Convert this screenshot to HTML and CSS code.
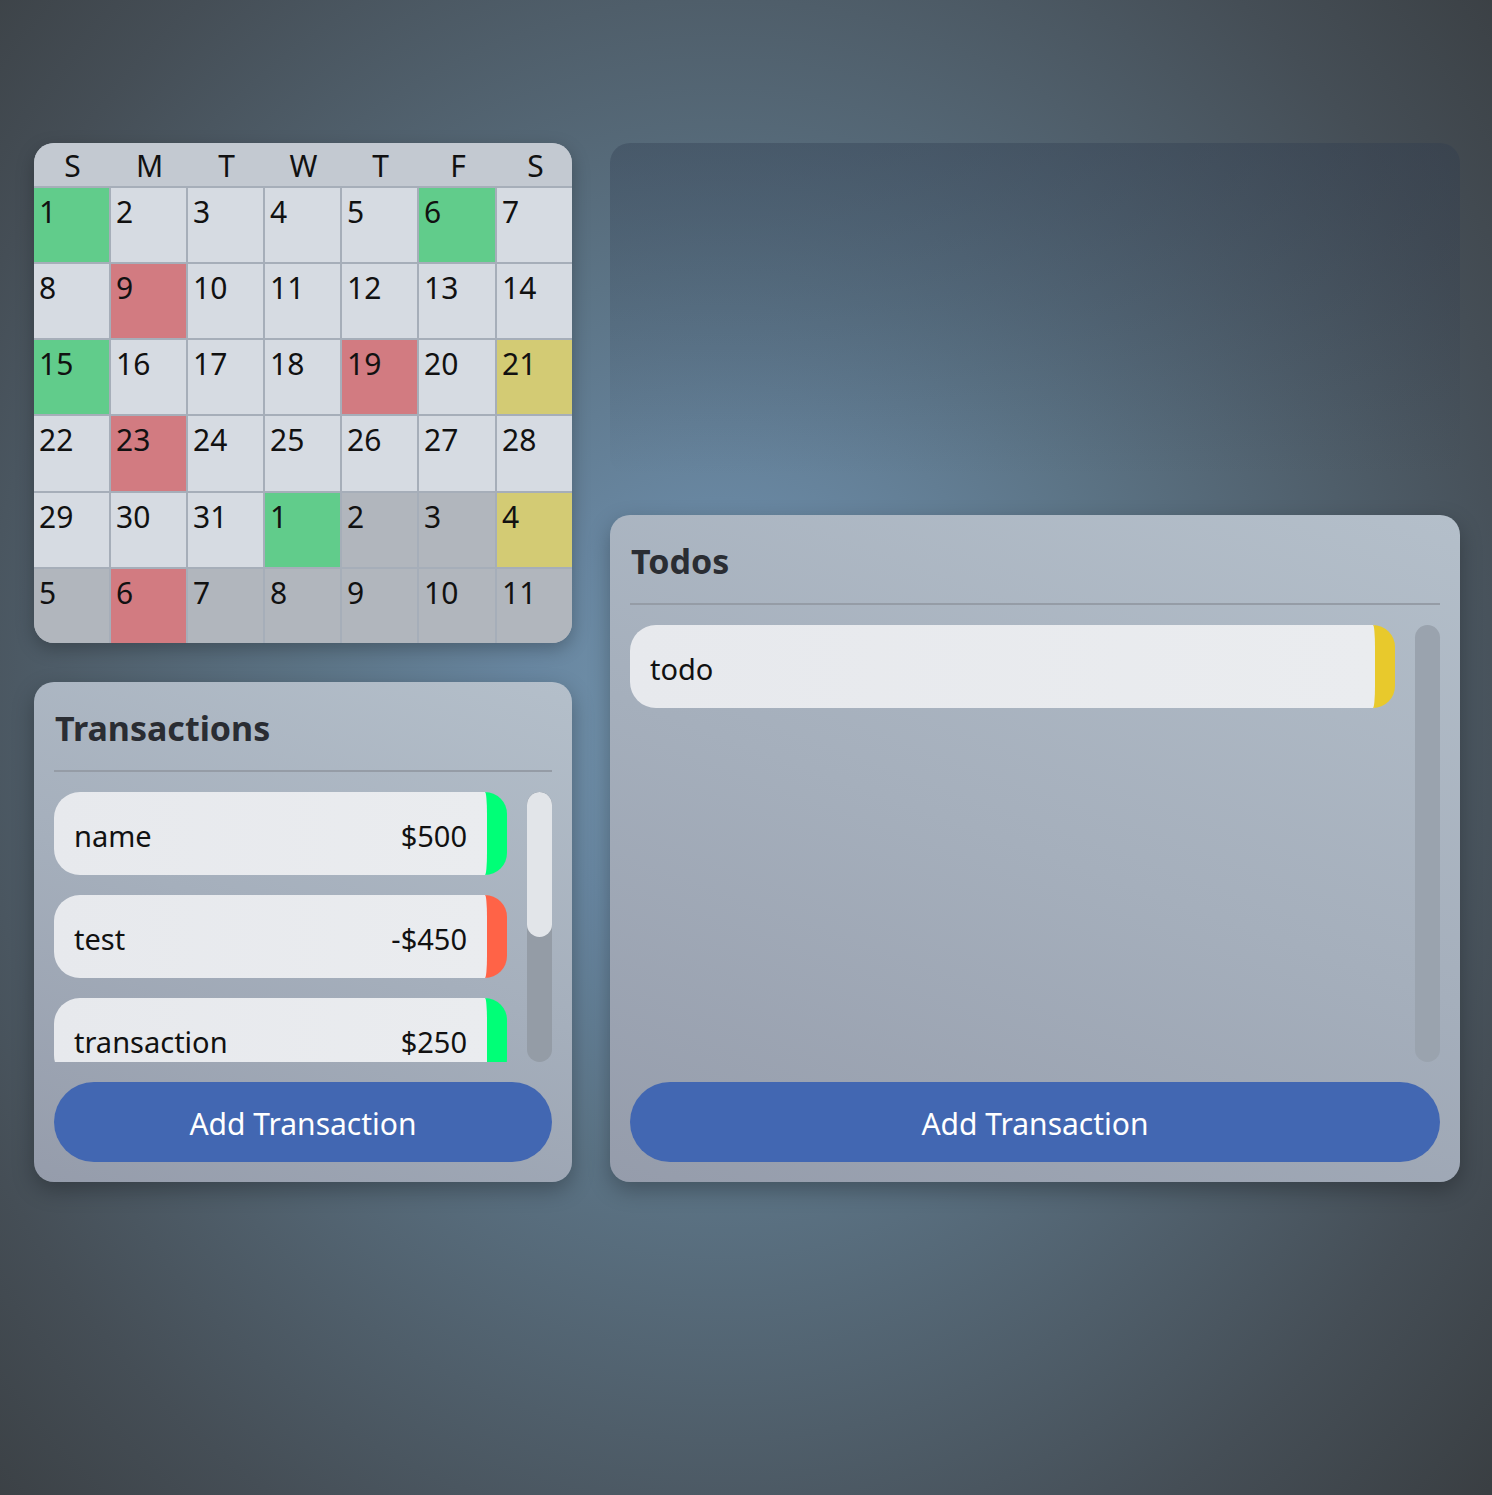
FILE: index.html
```html
<!DOCTYPE html>
<html>
<head>
<meta charset="utf-8">
<link rel="stylesheet" href="styles.css">
</head>
<body>
<div class="page">
  <div class="col left">
    <div class="calendar">
      <div class="hd">S</div><div class="hd">M</div><div class="hd">T</div><div class="hd">W</div><div class="hd">T</div><div class="hd">F</div><div class="hd">S</div>
      <div class="c g">1</div><div class="c">2</div><div class="c">3</div><div class="c">4</div><div class="c">5</div><div class="c g">6</div><div class="c">7</div>
      <div class="c">8</div><div class="c r">9</div><div class="c">10</div><div class="c">11</div><div class="c">12</div><div class="c">13</div><div class="c">14</div>
      <div class="c g">15</div><div class="c">16</div><div class="c">17</div><div class="c">18</div><div class="c r">19</div><div class="c">20</div><div class="c y">21</div>
      <div class="c">22</div><div class="c r">23</div><div class="c">24</div><div class="c">25</div><div class="c">26</div><div class="c">27</div><div class="c">28</div>
      <div class="c">29</div><div class="c">30</div><div class="c">31</div><div class="c g">1</div><div class="c o">2</div><div class="c o">3</div><div class="c y">4</div>
      <div class="c o">5</div><div class="c r">6</div><div class="c o">7</div><div class="c o">8</div><div class="c o">9</div><div class="c o">10</div><div class="c o">11</div>
    </div>
    <div class="card trans">
      <h2 class="title">Transactions</h2>
      <div class="divider"></div>
      <div class="listwrap">
        <div class="list">
          <div class="item pos"><span>name</span><span>$500</span></div>
          <div class="item neg"><span>test</span><span>-$450</span></div>
          <div class="item pos"><span>transaction</span><span>$250</span></div>
        </div>
        <div class="track"><div class="thumb"></div></div>
      </div>
      <button class="btn">Add Transaction</button>
    </div>
  </div>
  <div class="col right">
    <div class="ghost"></div>
    <div class="card todos">
      <h2 class="title">Todos</h2>
      <div class="divider"></div>
      <div class="listwrap">
        <div class="list">
          <div class="item todo"><span>todo</span></div>
        </div>
        <div class="track full"></div>
      </div>
      <button class="btn">Add Transaction</button>
    </div>
  </div>
</div>
</body>
</html>
```
FILE: styles.css
```css
* { box-sizing: border-box; }
html, body { margin: 0; padding: 0; }
body {
  width: 1492px;
  height: 1495px;
  overflow: hidden;
  font-family: "Noto Sans", "Open Sans", sans-serif;
  background: radial-gradient(ellipse 900px 1000px at 720px 720px, #7596ae 0%, #6886a0 22%, #5c7486 45%, #4f5e6a 72%, #454e56 92%, #3a3f43 115%);
}
.page {
  display: flex;
  gap: 38px;
  padding: 143px 32px 0 34px;
}
.col { display: flex; flex-direction: column; gap: 39px; }
.left { width: 538px; }
.right { width: 850px; }

.calendar {
  height: 500px;
  border-radius: 20px;
  overflow: hidden;
  display: grid;
  grid-template-columns: 75px 75px 75px 75px 75px 76px 75px;
  grid-template-rows: 43px repeat(6, 1fr);
  column-gap: 2px;
  row-gap: 2px;
  background: #a6aeb9;
  box-shadow: 0 6px 18px rgba(0,0,0,0.25);
}
.hd {
  background: #c3c9d1;
  font-size: 30px;
  text-align: center;
  line-height: 46px;
  color: #111;
  margin-right: -2px;
}
.c {
  background: #d6dbe2;
  font-size: 30px;
  line-height: 48px;
  padding-left: 5px;
  color: #111;
}
.c.g { background: #61cc8b; }
.c.r { background: #d27b81; }
.c.y { background: #d3cb74; }
.c.o { background: #b1b6bd; }

.card {
  border-radius: 20px;
  padding: 20px;
  display: flex;
  flex-direction: column;
  background: linear-gradient(20deg, #959cab 0%, #a5afbc 50%, #b4bfca 100%);
  box-shadow: 0 8px 22px rgba(0,0,0,0.28);
}
.trans { height: 500px; }
.todos { height: 667px; }
.ghost {
  height: 333px;
  border-radius: 20px;
  background: linear-gradient(180deg, rgba(45,58,78,0.35) 0%, rgba(45,58,78,0.18) 50%, rgba(45,58,78,0) 100%);
}
.title {
  margin: 0;
  height: 68px;
  font-size: 34px;
  font-weight: 700;
  color: #2a2d33;
  line-height: 52px;
  padding-left: 1px;
}
.divider {
  height: 2px;
  background: #959ca6;
  flex: none;
}
.listwrap {
  flex: 1;
  display: flex;
  gap: 20px;
  margin: 20px 0;
  min-height: 0;
}
.list {
  flex: 1;
  overflow: hidden;
  display: flex;
  flex-direction: column;
  gap: 20px;
}
.item {
  flex: none;
  height: 83px;
  border-radius: 26px 22px 22px 26px;
  background: linear-gradient(90deg, #e7e9ed, #eaecef);
  border-right: 20px solid #00ff77;
  display: flex;
  justify-content: space-between;
  align-items: center;
  padding: 4px 20px 0 20px;
  font-size: 29px;
  color: #111;
}
.item.neg { border-right-color: #ff6347; }
.item.todo { border-right-color: #e8c92c; }
.track {
  width: 25px;
  flex: none;
  border-radius: 13px;
  background: #949ca6;
  overflow: hidden;
}
.track.full { background: #9aa3ae; }
.thumb {
  height: 145px;
  border-radius: 13px;
  background: #e2e5e9;
}
.btn {
  flex: none;
  height: 80px;
  border: none;
  border-radius: 40px;
  background: #4267b2;
  color: #fff;
  font-family: inherit;
  font-size: 30px;
  padding: 2px 0 0 0;
}
```
